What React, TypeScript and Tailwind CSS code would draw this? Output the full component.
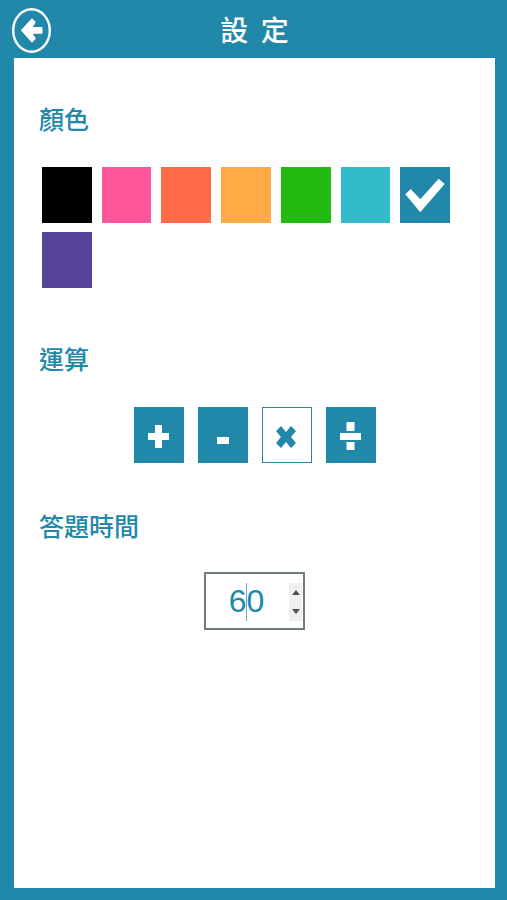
import { useState } from "react";

const COLORS = [
  { name: "黑色", className: "bg-black" },
  { name: "粉紅色", className: "bg-[#ff5599]" },
  { name: "橘紅色", className: "bg-[#ff6b47]" },
  { name: "橘色", className: "bg-[#ffaa44]" },
  { name: "綠色", className: "bg-[#22bb11]" },
  { name: "青色", className: "bg-[#33bbcc]" },
  { name: "藍色", className: "bg-[#2288aa]" },
  { name: "紫色", className: "bg-[#554499]" },
];

const OPERATORS = [
  { name: "加", path: "M7 0h7v8h7v7h-7v8H7v-8H0V8h7z" },
  { name: "減", path: "M5 12h12v7H5z" },
  { name: "乘", path: "M5 1l5 6 5-6 5 5-5 6 5 6-5 5-5-6-5 6-5-5 5-6-5-6z" },
  { name: "除", path: "M6.5-3h8v9h-8zM0 8h21v7H0zM6.5 17h8v8h-8z" },
];

function SectionTitle({ children }: { children: string }) {
  return <h2 className="text-[25px] leading-9 font-medium">{children}</h2>;
}

export default function App() {
  const [color, setColor] = useState(6);
  const [enabled, setEnabled] = useState([true, true, false, true]);
  const [seconds, setSeconds] = useState(60);

  return (
    <div className="flex min-h-screen flex-col bg-[#2288aa] pr-3 pb-3 pl-3.5 font-['Noto_Sans_CJK_TC',sans-serif] text-[#2288aa]">
      <header className="relative flex h-[58px] items-center justify-center text-white">
        <button type="button" aria-label="返回" className="absolute -left-0.5 top-2">
          <svg className="block h-[45px] w-10" viewBox="0 0 40 45" fill="none">
            <ellipse cx="19.5" cy="22.5" rx="18.3" ry="21.2" stroke="currentColor" strokeWidth="2.4" />
            <path
              d="M9.8 22.3 20 11.3 23 14.2 19.5 19.7H29.8v5.4H19.5l3.5 5.4-3 3.2z"
              fill="currentColor"
              stroke="currentColor"
              strokeWidth="1.4"
              strokeLinejoin="round"
            />
          </svg>
        </button>
        <h1 className="text-[28px] leading-10 font-medium">{"設\u00a0 定"}</h1>
      </header>

      <main className="flex-1 bg-white px-[25px] pt-[42px] pb-8">
        <section>
          <SectionTitle>顏色</SectionTitle>
          <div className="mt-[31px] mr-5 ml-[3px] grid grid-cols-7 gap-x-2.5 gap-y-[9px]">
            {COLORS.map((item, index) => (
              <button
                key={item.name}
                type="button"
                aria-label={item.name}
                aria-pressed={color === index}
                onClick={() => setColor(index)}
                className={`flex h-14 items-center justify-center text-white ${item.className}`}
              >
                {color === index && (
                  <svg className="h-9 w-10" viewBox="0 0 40 36" fill="currentColor">
                    <path d="M.3 17.3 5.7 12l9.6 10.3L33.7 1.7l6 5.3-24.4 28.3z" />
                  </svg>
                )}
              </button>
            ))}
          </div>
        </section>

        <section className="mt-[52px]">
          <SectionTitle>運算</SectionTitle>
          <div className="mt-[31px] flex justify-center gap-3.5">
            {OPERATORS.map((item, index) => (
              <button
                key={item.name}
                type="button"
                aria-label={item.name}
                aria-pressed={enabled[index]}
                onClick={() => setEnabled(enabled.map((on, i) => (i === index ? !on : on)))}
                className={`flex h-14 w-[50px] items-center justify-center border border-[#2288aa] pt-1 ${
                  enabled[index] ? "bg-[#2288aa] text-white" : "bg-white"
                }`}
              >
                <svg className="h-6 w-[21px] overflow-visible" viewBox="0 0 21 24" fill="currentColor">
                  <path d={item.path} />
                </svg>
              </button>
            ))}
          </div>
        </section>

        <section className="mt-11">
          <SectionTitle>答題時間</SectionTitle>
          <div className="relative mx-auto mt-[29px] w-[101px]">
            <input
              type="number"
              aria-label="答題時間"
              value={seconds}
              onChange={(event) => setSeconds(Number(event.target.value))}
              className="block h-[58px] w-full appearance-none rounded-none border-2 border-[#727b7b] bg-white pr-4 text-center font-['Liberation_Sans',sans-serif] text-[32px] outline-none [-moz-appearance:textfield] [&::-webkit-inner-spin-button]:appearance-none"
            />
            <span className="pointer-events-none absolute top-[11px] left-[42px] h-[38px] w-px bg-[#66adc5]" />
            <div className="absolute top-[11px] right-[3px] flex h-[38px] w-[13px] flex-col bg-[#f0f0f0] text-[#505050]">
              <button
                type="button"
                aria-label="增加"
                onClick={() => setSeconds(seconds + 1)}
                className="flex flex-1 items-center justify-center"
              >
                <svg className="h-[5px] w-2" viewBox="0 0 8 5" fill="currentColor">
                  <path d="M0 5 4 0l4 5z" />
                </svg>
              </button>
              <button
                type="button"
                aria-label="減少"
                onClick={() => setSeconds(Math.max(0, seconds - 1))}
                className="flex flex-1 items-center justify-center"
              >
                <svg className="h-[5px] w-2" viewBox="0 0 8 5" fill="currentColor">
                  <path d="M0 0 4 5l4-5z" />
                </svg>
              </button>
            </div>
          </div>
        </section>
      </main>
    </div>
  );
}
